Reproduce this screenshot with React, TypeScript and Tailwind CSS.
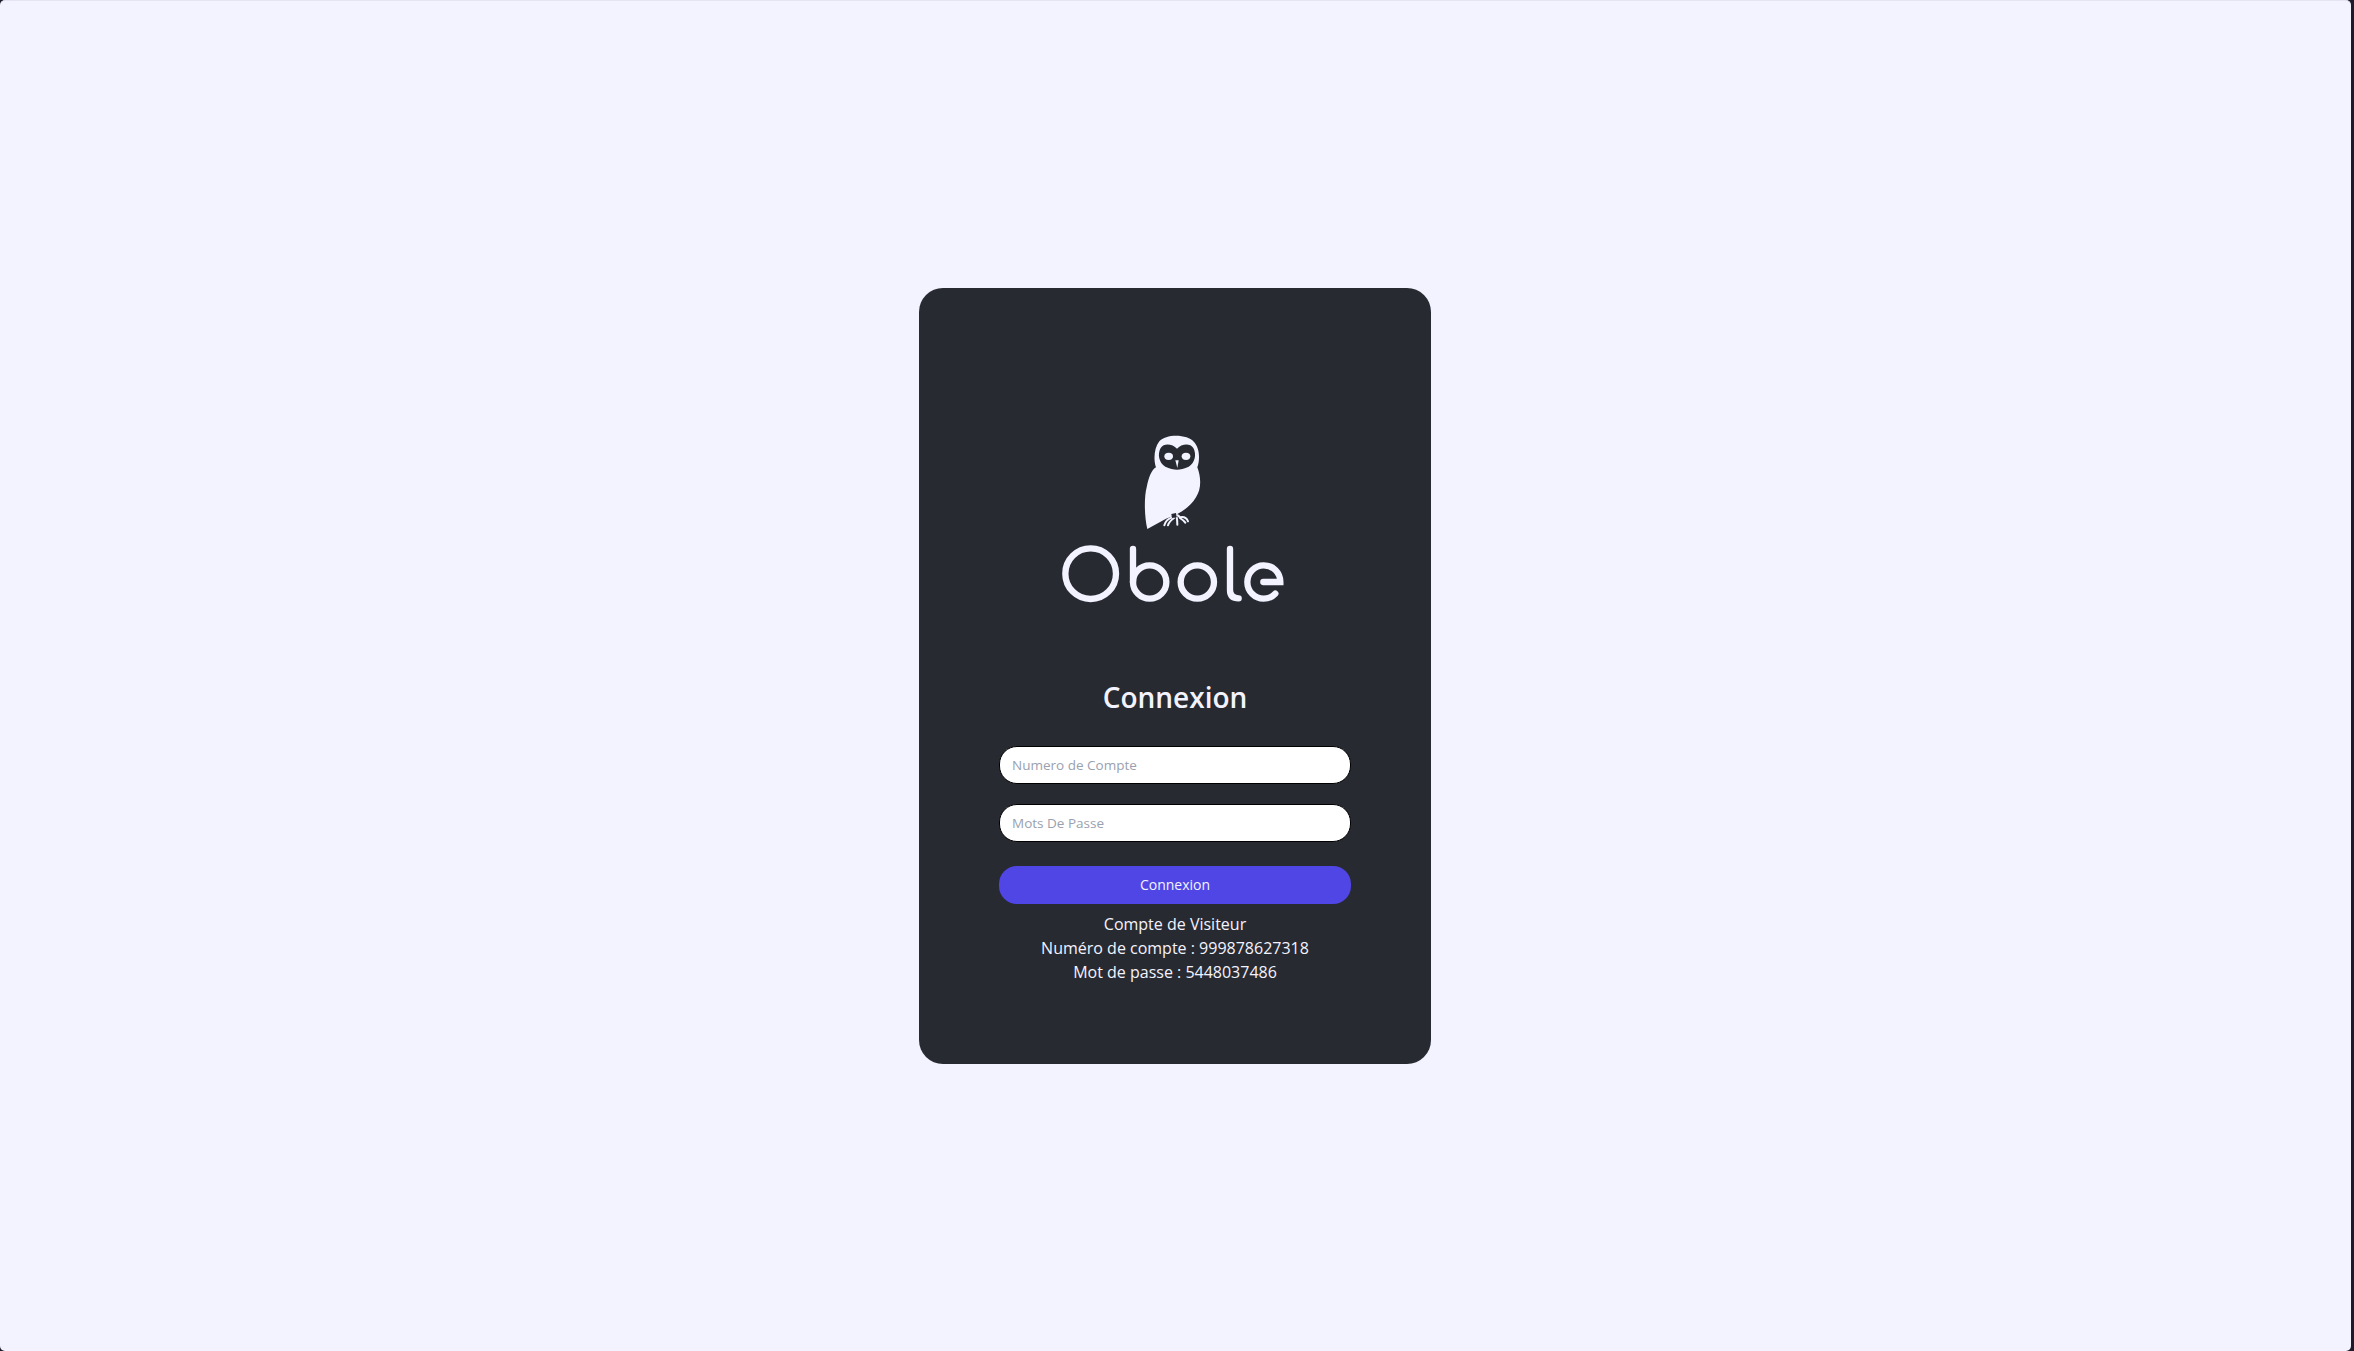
const fontStack = "font-['Open_Sans','Noto_Sans',sans-serif]";

function ObolLogo() {
  return (
    <svg width="290" height="210" viewBox="0 0 870 630" className="shrink-0" aria-label="Obole">
      {/* owl body and head */}
      <path
        fill="#f3f3ff"
        d="M378 172 C366 178 356 200 350 232 C342 262 343 320 352 357 L408 326 C440 316 478 296 498 262 C514 238 514 205 502 172 C510 150 510 115 492 96 C474 72 408 70 388 94 C372 114 370 150 378 172 Z"
      />
      {/* face */}
      <path
        fill="#282a32"
        d="M441 116 C428 102 402 98 392 114 C382 132 386 158 406 170 C418 176 432 178 441 179 C450 178 464 176 476 170 C496 158 500 132 490 114 C480 98 454 102 441 116 Z"
      />
      <ellipse cx="416" cy="139" rx="13" ry="11" fill="#f3f3ff" />
      <ellipse cx="468" cy="139" rx="13" ry="11" fill="#f3f3ff" />
      <path d="M436 151 L446 151 L442 174 Z" fill="#f3f3ff" />
      {/* claws */}
      <g fill="none" stroke="#f3f3ff" strokeWidth="6" strokeLinecap="round" strokeLinejoin="round">
        <path d="M424 316 C438 312 446 316 450 322 C460 320 470 324 474 334" />
        <path d="M426 322 C414 326 406 334 403 346" />
        <path d="M432 324 C424 330 416 336 414 346" />
        <path d="M440 322 C442 328 442 336 442 344" />
        <path d="M450 324 C456 328 462 332 466 338" />
      </g>
      <path d="M424 312 L438 309 L440 322 L426 324 Z" fill="#282a32" />
      {/* wordmark */}
      <g fill="none" stroke="#f3f3ff" strokeWidth="19" strokeLinecap="round">
        <circle cx="182" cy="491" r="76" />
        <circle cx="359" cy="516" r="50" />
        <line x1="309" y1="417" x2="309" y2="516" />
        <circle cx="502" cy="516" r="50" />
        <path d="M600 417 V540 Q600 565 626 565" />
        <path d="M700 516 H751 C751 486 728 466 701 466 C674 466 652 488 652 516 C652 544 674 566 701 566 C716 566 728 560 736 551" />
      </g>
    </svg>
  );
}

export default function App() {
  return (
    <div className={`flex h-screen bg-[#1e1a2b] ${fontStack}`}>
      <main className="flex-1 flex items-center justify-center pr-px bg-[#f3f3ff] border-t border-[#e4e4f2] rounded-[5px]">
        <div className="w-[512px] h-[776px] shrink-0 rounded-3xl bg-[#282a32] pt-[122px] flex flex-col items-center text-[#f3f3ff]">
          <ObolLogo />
          <h1 className="mt-[59px] text-[28px] leading-9 font-semibold">Connexion</h1>
          <form className="mt-[31px] w-[352px] flex flex-col">
            <input
              type="text"
              placeholder="Numero de Compte"
              className="h-[38px] w-full rounded-[18px] bg-white border border-black px-3 pb-px text-[13.5px] text-black placeholder:text-gray-400 outline-none"
            />
            <input
              type="password"
              placeholder="Mots De Passe"
              className="mt-5 h-[38px] w-full rounded-[18px] bg-white border border-black px-3 pb-px text-[13.5px] text-black placeholder:text-gray-400 outline-none"
            />
            <button type="button" className="mt-6 h-[38px] w-full rounded-[18px] bg-[#4f46e5] text-sm text-[#f3f3ff]">
              Connexion
            </button>
          </form>
          <div className="mt-2 text-center text-base leading-6">
            <p>Compte de Visiteur</p>
            <p>Numéro de compte : 999878627318</p>
            <p>Mot de passe : 5448037486</p>
          </div>
        </div>
      </main>
      <div className="w-[3px]" />
    </div>
  );
}
